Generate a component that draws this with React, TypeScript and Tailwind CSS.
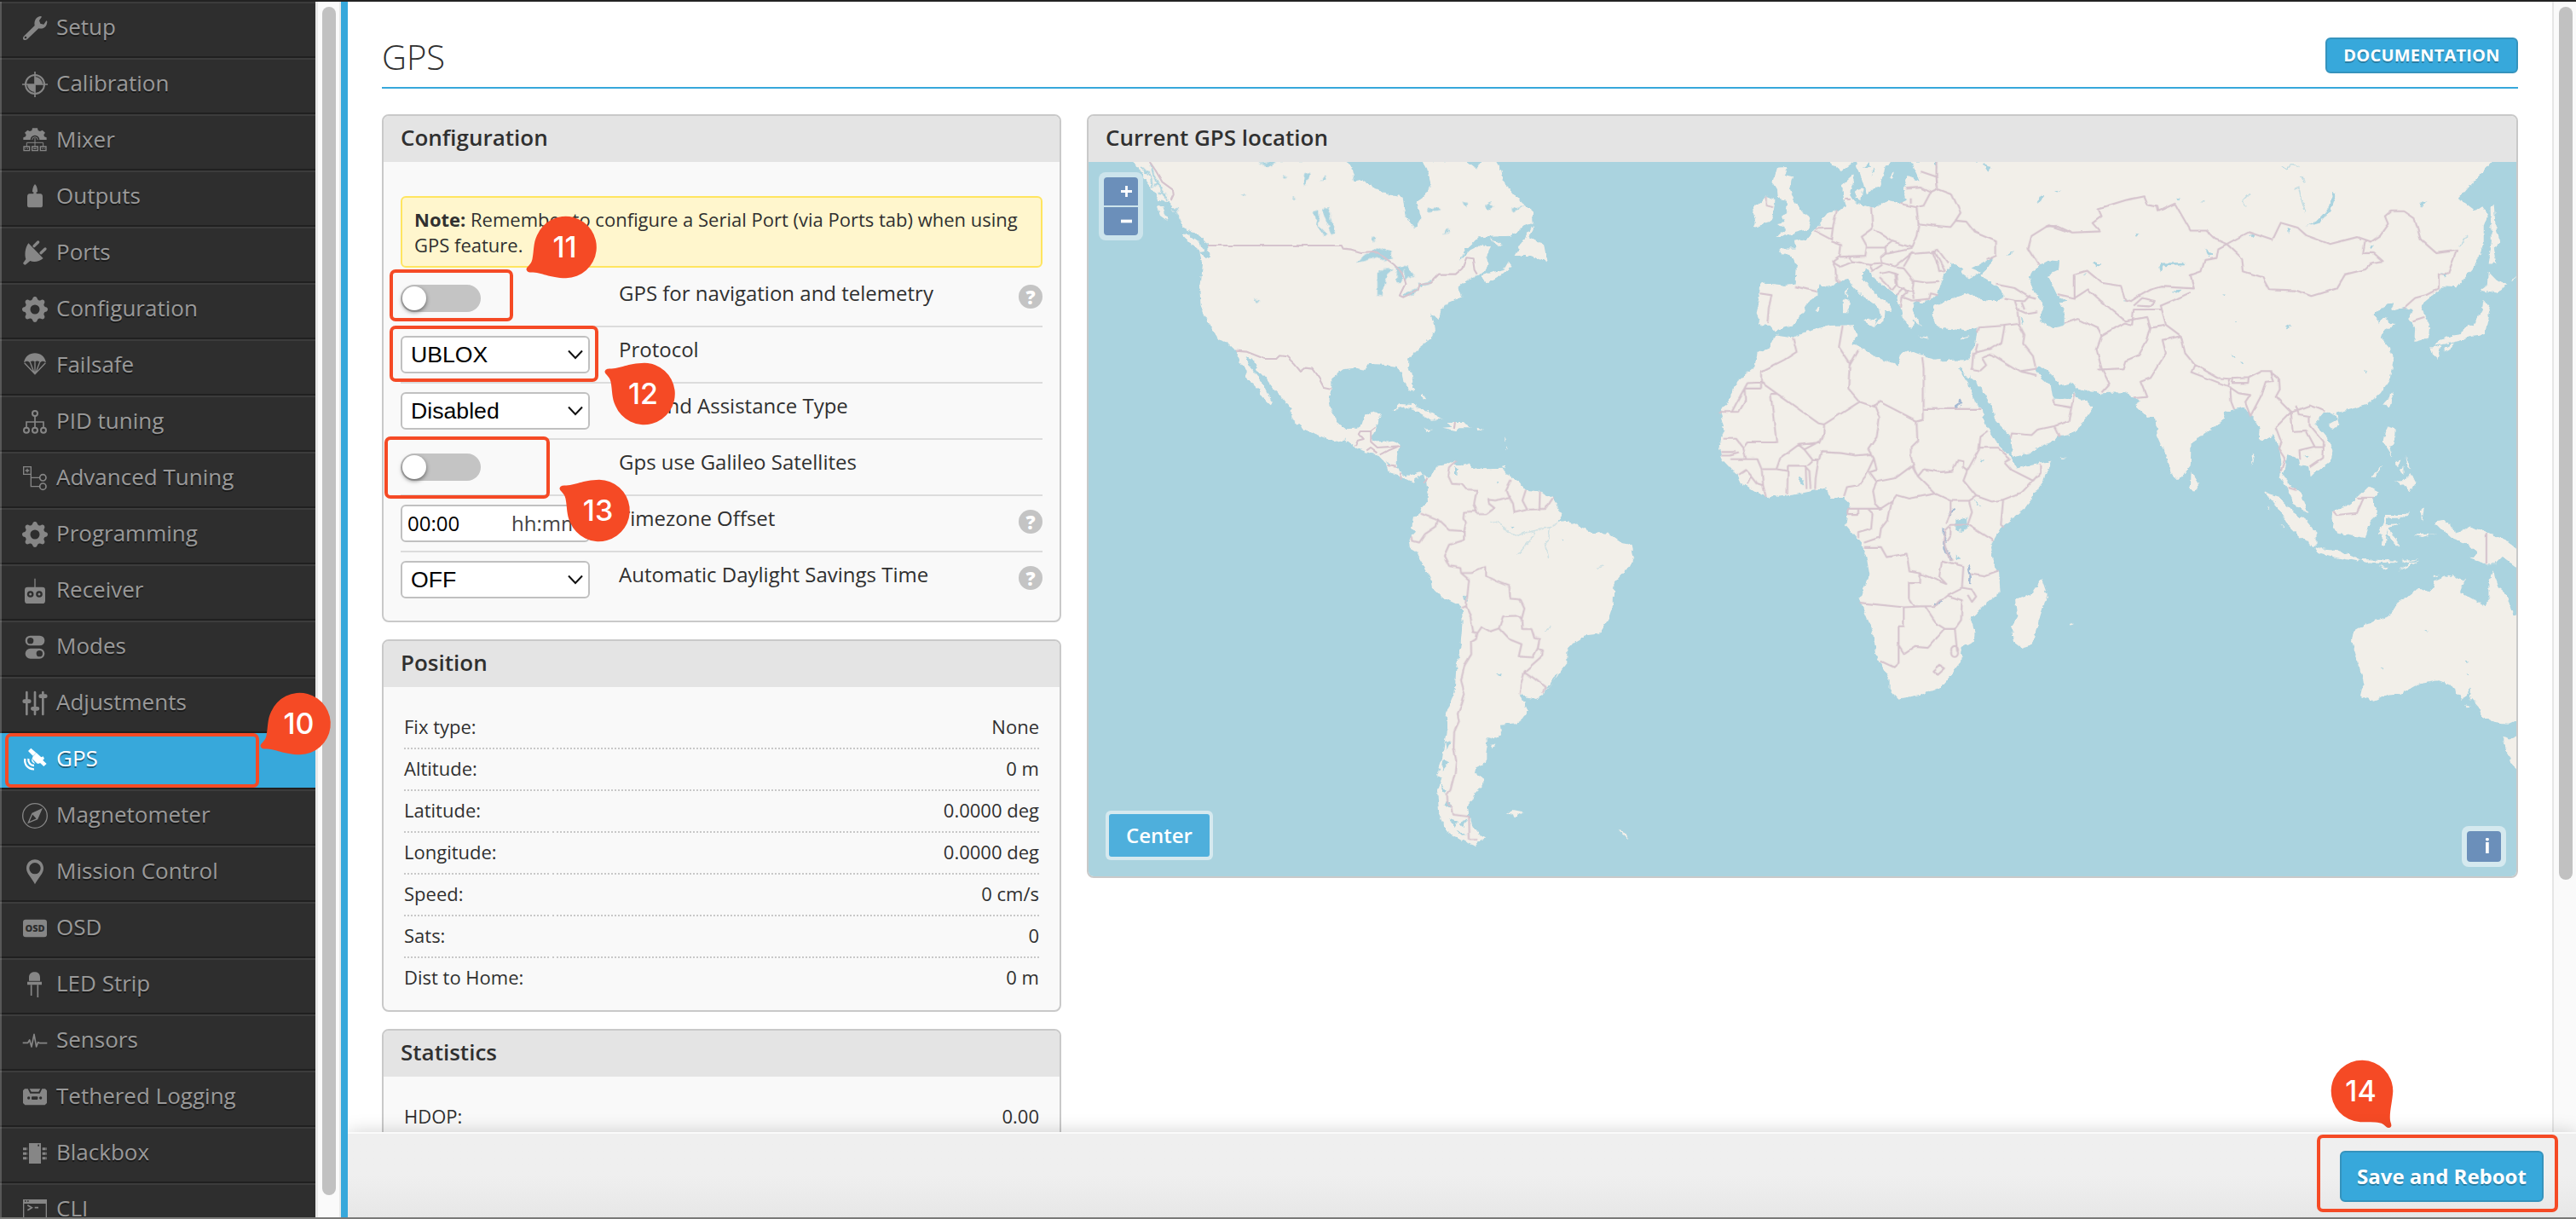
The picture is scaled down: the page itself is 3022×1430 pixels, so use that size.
import React from "react";
import { BsGearFill } from "react-icons/bs";

const S = { fill: "none", stroke: "currentColor" } as const;
const BG = "#2e2e2e";

const icons: Record<string, React.ReactNode> = {
  Setup: (
    <>
      <path fill="currentColor" d="M5 74 44 36C41 18 50 4 66 3L69 5 60 18 64 29 76 32 85 19 88 21C88 39 76 50 58 46L18 84C10 91-2 86 5 74Z" />
      <circle cx="12" cy="78" r="4" fill={BG} />
    </>
  ),
  Calibration: (
    <>
      <circle cx="45" cy="45" r="33" {...S} strokeWidth="6" />
      <path d="M45 0V90M0 45H90" {...S} strokeWidth="5" />
      <path fill="currentColor" d="M45 45V18A27 27 0 0 1 72 45ZM45 45V72A27 27 0 0 1 18 45Z" />
    </>
  ),
  Mixer: (
    <>
      <path fill="currentColor" d="M4 42V34L12 31 14 24 9 17 19 8 27 12 34 9 36 1H54L56 9 63 12 71 8 81 17 76 24 78 31 86 34V42H61A16 16 0 0 0 29 42Z" />
      <path d="M35 42A10 10 0 0 1 55 42M45 36V60M16 66V52H74V66M45 60V66" {...S} strokeWidth="3" />
      <path d="M6 66H26V80H6ZM35 66H55V80H35ZM64 66H84V80H64Z" {...S} strokeWidth="4" />
      <path d="M11 73H14M18 73H21M40 73H50M69 73H72M76 73H79" {...S} strokeWidth="4" />
    </>
  ),
  Outputs: (
    <path fill="currentColor" d="M45 0C53 8 54 18 54 28H50V34H64Q72 35 72 44V74Q72 82 64 82H26Q18 82 18 74V44Q18 35 26 34H40V28H36C36 18 38 8 45 0Z" />
  ),
  Ports: (
    <>
      <path fill="currentColor" d="M22 10 74 63C60 75 42 78 28 72L14 84Q10 88 6 84L3 80 13 66C8 52 10 26 22 10Z" />
      <path d="M42 20 56 6M66 44 81 30" {...S} strokeWidth="10" strokeLinecap="round" />
    </>
  ),
  Failsafe: (
    <>
      <path fill="currentColor" d="M6 34C10 12 26 1 45 1S80 12 84 34C76 27 68 28 63 34 57 27 50 27 45 33 40 27 33 27 27 34 22 28 14 27 6 34Z" />
      <path d="M8 35 45 74 82 35M28 32 43 72M62 32 47 72M45 32V76" {...S} strokeWidth="4" />
    </>
  ),
  "PID tuning": (
    <>
      <g {...S} strokeWidth="6">
        <circle cx="45" cy="15" r="9" /><circle cx="15" cy="74" r="9" /><circle cx="45" cy="74" r="9" /><circle cx="75" cy="74" r="9" />
      </g>
      <path d="M45 24V65M15 65V45H75V65" {...S} strokeWidth="5" />
    </>
  ),
  "Advanced Tuning": (
    <>
      <path d="M5 5H31V31H5ZM18 11V25M11 18H25" {...S} strokeWidth="4" />
      <path d="M31 31V74H62M31 43H62" {...S} strokeWidth="4" />
      <g {...S} strokeWidth="5"><circle cx="73" cy="43" r="11" /><circle cx="73" cy="74" r="11" /></g>
    </>
  ),
  Receiver: (
    <>
      <path d="M45 2V34" {...S} strokeWidth="4" />
      <rect x="9" y="32" width="72" height="58" rx="10" fill="currentColor" />
      <g fill="currentColor" stroke={BG} strokeWidth="7"><circle cx="29" cy="57" r="8" /><circle cx="60" cy="57" r="8" /></g>
    </>
  ),
  Modes: (
    <>
      <rect x="11" y="5" width="68" height="35" rx="17" fill="currentColor" />
      <rect x="11" y="50" width="68" height="36" rx="18" fill="currentColor" />
      <circle cx="29" cy="23" r="11" fill={BG} /><circle cx="61" cy="68" r="11" fill={BG} />
    </>
  ),
  Adjustments: (
    <>
      <path d="M16 6V84M45 6V84M73 6V84" {...S} strokeWidth="8" strokeLinecap="round" />
      <path d="M8 38H25M37 64H54M65 20H82" {...S} strokeWidth="14" strokeLinecap="round" />
    </>
  ),
  GPS: (
    <>
      <path fill="currentColor" d="M31 5 49 21 38 32 21 15ZM50 21 67 37 74 34 78 42 60 59 53 59 35 42 38 34ZM67 42 86 60 76 69 59 53Z" />
      <path d="M34 42Q30 56 46 60" fill="currentColor" />
      <path d="M22 42C20 56 30 66 42 66M10 42C7 64 22 80 42 79" {...S} strokeWidth="7" />
    </>
  ),
  Magnetometer: (
    <>
      <circle cx="45" cy="45" r="43" {...S} strokeWidth="4" />
      <path d="M68 22 53 56 22 69 36 37ZM36 37 53 56" {...S} strokeWidth="4" />
      <path fill="currentColor" d="M68 22 53 56 36 37Z" />
    </>
  ),
  "Mission Control": (
    <path fill="currentColor" fillRule="evenodd" d="M45 1C63 1 75 15 75 32 75 50 57 64 45 88 33 64 15 50 15 32 15 15 27 1 45 1ZM45 12A20 20 0 1 0 45 52 20 20 0 1 0 45 12Z" />
  ),
  OSD: (
    <>
      <rect x="3" y="14" width="84" height="62" rx="9" fill="currentColor" />
      <text x="45" y="57" textAnchor="middle" fontSize="33" fontWeight="800" fill={BG} fontFamily="Open Sans">OSD</text>
    </>
  ),
  "LED Strip": (
    <>
      <path fill="currentColor" d="M24 32V20C24 6 34 1 44 1S63 6 63 20V32ZM18 35H69V46H18Z" />
      <path d="M32 46V84M55 46V90" {...S} strokeWidth="5" />
    </>
  ),
  Sensors: (
    <path d="M2 52H20L26 42 33 66 42 22 50 66 56 50 62 53H88" {...S} strokeWidth="5" strokeLinejoin="round" />
  ),
  "Tethered Logging": (
    <>
      <path fill="currentColor" d="M9 16H20L28 32H62L70 16H81L87 22V66L80 73H10L3 66V22ZM26 16H64L58 26H32Z" />
      <circle cx="23" cy="48" r="5" fill={BG} /><circle cx="65" cy="48" r="5" fill={BG} /><rect x="33" y="43" width="22" height="11" rx="3" fill={BG} />
    </>
  ),
  Blackbox: (
    <>
      <rect x="24" y="9" width="42" height="72" fill="currentColor" />
      <path d="M3 29H19M3 46H19M3 62H19M71 29H87M71 46H87M71 62H87" {...S} strokeWidth="9" strokeDasharray="12 2" />
      <rect x="55" y="14" width="5" height="6" fill={BG} />
    </>
  ),
  CLI: (
    <>
      <path d="M5 11H85V88H5Z" {...S} strokeWidth="4" />
      <path fill="currentColor" d="M3 9H87V24H3Z" />
      <path d="M19 29 34 38 19 47M44 38H57" {...S} strokeWidth="5" />
      <path d="M9 15H14M18 15H23" stroke={BG} strokeWidth="4" />
    </>
  ),
};

const tabs = ["Setup", "Calibration", "Mixer", "Outputs", "Ports", "Configuration", "Failsafe", "PID tuning", "Advanced Tuning", "Programming", "Receiver", "Modes", "Adjustments", "GPS", "Magnetometer", "Mission Control", "OSD", "LED Strip", "Sensors", "Tethered Logging", "Blackbox", "CLI"];

function Sidebar() {
  return (
    <nav className="w-[370px] shrink-0 overflow-hidden bg-[#2e2e2e]">
      {tabs.map((t) => {
        const on = t === "GPS";
        return (
          <div
            key={t}
            className={
              "flex h-[66px] items-start border-y-2 border-b-[#202020] pl-[26px] " +
              (on ? "border-t-[#37a8db] bg-[#37a8db] text-white" : "border-t-[#3c3c3c] text-[#868686]")
            }
          >
            <span className="mt-[14px] block h-[30px] w-[30px]">
              {icons[t] ? (
                <svg viewBox="0 0 90 90" className="h-[30px] w-[30px] overflow-visible">{icons[t]}</svg>
              ) : (
                <BsGearFill className="h-[30px] w-[30px]" />
              )}
            </span>
            <span className={"ml-[10px] text-[26px] leading-[55px] whitespace-nowrap [text-shadow:0_2px_rgba(0,0,0,0.45)] " + (on ? "text-white" : "text-[#999999]")}>{t}</span>
          </div>
        );
      })}
    </nav>
  );
}

function Panel({ title, className = "", children }: { title: string; className?: string; children: React.ReactNode }) {
  return (
    <section className={"flex flex-col overflow-hidden rounded-[8px] border-2 border-[#c9c9c9] bg-[#f9f9f9] " + className}>
      <h2 className="h-[54px] shrink-0 bg-[#e4e4e4] pl-5 text-[26px] leading-[51px] font-semibold text-[#303030]">{title}</h2>
      {children}
    </section>
  );
}

function Toggle() {
  return (
    <div className="mt-4 h-8 w-[94px] rounded-full bg-[#c4c4c4] p-[2px]">
      <div className="h-7 w-7 rounded-full bg-white shadow-[0_2px_5px_rgba(0,0,0,0.5)]" />
    </div>
  );
}

function SelectBox({ value }: { value: string }) {
  return (
    <div className="mt-[10px] flex h-11 w-[222px] items-center justify-between rounded-[6px] border-2 border-[#c0c0c0] bg-white pr-[5px] pl-[10px] font-['Liberation_Sans'] text-[26.67px] text-black">
      <span>{value}</span>
      <svg viewBox="0 0 20 12" className="h-3 w-5"><path d="M2 1.5 10 10 18 1.5" fill="none" stroke="#111" strokeWidth="2" /></svg>
    </div>
  );
}

function TimeBox() {
  return (
    <div className="mt-[10px] flex h-11 w-[222px] items-center rounded-[6px] border-2 border-[#c0c0c0] bg-white pl-[6px] text-[24px] leading-[38px] text-black">
      <span className="w-[122px]">00:00</span>
      <span className="text-[#444]">hh:mm</span>
    </div>
  );
}

const settings = [
  { control: <Toggle />, label: "GPS for navigation and telemetry", help: true },
  { control: <SelectBox value="UBLOX" />, label: "Protocol" },
  { control: <SelectBox value="Disabled" />, label: "Ground Assistance Type" },
  { control: <Toggle />, label: "Gps use Galileo Satellites" },
  { control: <TimeBox />, label: "Timezone Offset", help: true },
  { control: <SelectBox value="OFF" />, label: "Automatic Daylight Savings Time", help: true },
];

function DataRow({ name, value, last }: { name: string; value: string; last?: boolean }) {
  const line = last ? "border-transparent" : "border-[#c8c8c8]";
  return (
    <div className="flex h-[49px] gap-1 text-[22px] leading-[45px] text-[#303030]">
      <span className={"w-[170px] border-b-2 border-dotted " + line}>{name}</span>
      <span className={"flex-1 border-b-2 border-dotted text-right " + line}>{value}</span>
    </div>
  );
}

const position = [
  ["Fix type:", "None"], ["Altitude:", "0 m"], ["Latitude:", "0.0000 deg"], ["Longitude:", "0.0000 deg"],
  ["Speed:", "0 cm/s"], ["Sats:", "0"], ["Dist to Home:", "0 m"],
];

// Each region of the map keeps its own local coordinate frame.
const AMN = "translate(1260 120) scale(0.38265 0.33333)";
const AMS = "translate(1600 480) scale(0.33333 0.35714)";
const AFR = "translate(1960 180) scale(0.33333 0.42088)";
const ASI = "translate(2400 180) scale(0.39668 0.44643)";

const landAMN = "M180 205 205 245 230 290 245 320 262 345 295 350 300 380 325 410 335 440 385 470 410 500 415 545 405 550 385 525 392 570 385 655 388 710 400 750 420 790 443 835 470 845 492 870 510 915 530 945 525 965 550 990 570 1015 575 1035 600 1063 607 1055 590 1020 575 985 555 955 540 930 527 898 548 905 560 940 590 975 610 1005 640 1040 665 1080 668 1115 700 1145 740 1170 800 1195 830 1187 860 1212 880 1228 930 1240 955 1270 962 1298 1000 1318 1040 1340 1045 1322 1070 1312 1080 1335 1100 1350 1110 1310 1085 1322 1060 1303 1030 1313 1010 1310 990 1290 990 1250 997 1205 980 1190 930 1195 915 1195 912 1180 930 1130 943 1095 920 1090 893 1100 885 1130 860 1148 830 1150 810 1135 785 1080 780 1045 790 1005 790 970 825 940 860 935 895 942 905 920 960 925 990 930 1005 950 1010 985 1030 1020 1043 1015 1040 975 1025 930 1025 905 1045 875 1095 830 1108 800 1105 780 1095 745 1115 765 1125 735 1135 710 1190 685 1180 650 1200 630 1240 605 1262 590 1270 560 1265 540 1278 510 1250 500 1215 520 1183 555 1200 520 1240 475 1340 470 1380 435 1408 430 1405 380 1370 350 1340 310 1320 290 1310 240 1292 205H1252L1230 235 1200 208 1190 205H1066L1085 245 1095 290 1075 330 1050 350 1065 410 1045 445 1015 400 1008 335 965 325 920 300 880 270 860 275 850 225 825 205ZM1250 610 1290 595 1318 588 1332 560 1342 575 1305 612 1262 640ZM1400 440 1410 440 1395 475 1440 500 1450 562 1400 540 1350 540 1370 500ZM1275 480 1315 500 1295 500ZM327 460 345 462 380 490 402 522 385 525 355 495ZM255 365 273 370 290 420 265 400ZM978 1085 1000 1062 1040 1065 1080 1085 1130 1115 1095 1118 1070 1100 1040 1080 1010 1072ZM1130 1148 1162 1145 1145 1125 1190 1125 1217 1147 1180 1147 1170 1158ZM1070 1150 1100 1152 1080 1160ZM1235 1145 1258 1152 1236 1155ZM1068 1025 1080 1045 1070 1045ZM1318 1180 1322 1190 1318 1200ZM1326 1210 1330 1218 1325 1225Z";
const waterAMN = "M865 565 880 545 905 530 935 510 970 525 975 550 945 558 930 545 885 560ZM930 600 945 588 980 585 960 605 950 640 945 682 930 680ZM985 575 1020 580 1045 610 1030 615 1015 625 1010 590 1005 630 988 635 990 600ZM1005 680 1050 655 1055 665 1015 688ZM1055 640 1098 628 1090 642 1060 650ZM760 375 780 372 800 460 790 468 770 410ZM735 385 748 380 750 430 775 465 768 472 745 430ZM706 250 722 245 712 290 702 292ZM755 280 772 255 772 275ZM553 685 568 700 562 705ZM915 475 924 480 920 495ZM565 215 590 212 620 205 600 225ZM1260 365 1275 352 1285 370 1265 382ZM1190 350 1208 355 1200 370ZM1080 375 1115 370 1125 378 1090 385ZM1338 380 1380 358 1345 388ZM1133 465 1150 440 1145 460ZM640 262 658 260 645 270ZM510 322H528L520 328ZM670 330 678 340 670 342ZM955 1262 972 1275 965 1280Z";
const channelsAMN = "M205 225 235 260 240 300M235 215 245 260 265 300 285 345M215 250 230 245M245 290 262 290M255 320 285 325M270 345 310 385 330 425M300 375 320 375";
const bordersAMN = "M232 210 250 240 270 280 303 308 305 325 297 345M410 504H820L825 515 850 518 880 528 920 525 950 545 980 570 1005 600 1015 640 998 680 1010 686 1055 660 1060 640 1095 632 1118 605H1170L1190 585 1203 547 1225 550 1230 590 1238 605M497 875 530 878 585 903 620 903 630 892 652 895 675 920 695 948 710 935 730 938 750 970 765 1002 790 1008M862 1212 870 1190 888 1185 875 1168 880 1158H910L925 1145M910 1158V1195L930 1215 997 1210 965 1225 940 1240M897 1225 910 1215 930 1232M960 1278 988 1283M1003 1300 1002 1325M1168 1125 1165 1152M1083 1322 1075 1340";
const landAMS = "M218 222 228 240 255 190 300 180 325 165 318 182 350 185 375 178 382 195 430 197 490 195 505 215 545 240 570 265 620 270 665 290 692 340 700 365 725 372 780 390 790 405 860 408 910 440 940 445 950 485 940 510 905 545 880 572 878 640 860 690 830 735 785 740 740 765 715 790 715 835 690 865 640 925 610 955 575 948 548 935 565 965 577 990 555 1022 530 1032 480 1035 483 1070 465 1082 433 1075 435 1100 430 1130 430 1160 395 1175 390 1195 422 1215 420 1235 390 1262 385 1285 365 1300 370 1335 380 1370 410 1400 430 1410 395 1418 398 1437 340 1415 290 1385 265 1330 258 1250 275 1210 255 1205 275 1150 285 1090 293 1045 290 1000 320 930 325 850 340 780 347 700 345 655 325 640 270 615 243 590 240 565 205 505 180 465 162 455 158 430 180 405 165 390 170 360 200 340 205 325 225 305 222 255ZM500 1330 525 1316 560 1322 530 1342 525 1328ZM895 1383 918 1392 935 1412 915 1400ZM445 1105 460 1102 452 1118ZM488 190 502 188 500 200Z";
const waterAMS = "M318 190 330 200 328 215 318 212ZM465 875 485 868 482 880ZM350 610 362 612 370 628 355 622ZM640 920 665 880 680 870 668 892 648 915ZM285 1095 305 1090 292 1120ZM280 1150 300 1160 275 1190ZM270 1230 290 1250 282 1260ZM280 1300 300 1290 305 1310ZM300 1345 330 1355 320 1375ZM335 1360 365 1345 350 1375ZM325 1385 360 1400 345 1402ZM678 372 700 350 720 372 700 380 715 374 690 366ZM695 422 703 430 697 434ZM515 382 530 388 522 392ZM468 238 475 242 470 248Z";
const riversAMS = "M680 375 655 388 605 398 570 405 545 415 510 405 480 375 445 365M605 398 590 425 545 475M655 388 650 430 640 440 650 490M820 520 845 512M640 728 658 712";
const bordersAMS = "M325 170 300 190 295 215 310 245 345 247 360 263 397 265 388 310 400 345 430 345 460 325 440 310 438 297 465 300 510 288 500 265 518 232M400 335 352 337 350 360 360 375 352 400 300 397 260 362 200 340M260 362 255 385 215 410 195 438 172 432 170 418M352 400 352 430 300 445 282 482 300 515 340 522 342 538 380 538 430 518 430 548 465 565 512 582 515 622 550 625 565 655 555 690 545 678 490 680 475 720 510 755 555 772 545 812 595 815 612 785 618 755 600 752 590 722H557L555 690M342 538 370 560 360 650 345 655M360 650 375 680 385 732 400 735 415 715 445 730 475 720M400 735 395 755 377 765 378 805 355 840 342 890 355 935 340 980 330 1000 335 1025 318 1060 316 1110 325 1155 320 1195 305 1250 293 1265 295 1298 310 1305 315 1332 370 1338 372 1412 400 1412M612 785 630 792 628 810 565 862 552 905 548 935M565 862 600 885 637 912 630 932M510 285 525 310 530 340 575 330 640 327 665 292M570 265 558 300 575 330M620 270 618 325";
const landAFR = "M1560 20H845L875 75 832 62 822 100 830 130 805 140 770 130 708 152 665 140 645 135 630 115 645 80 640 60 605 85 605 110 618 150 590 158 555 165 530 190 505 215 485 235 435 245 440 265 385 265 390 278 425 285 443 315 440 365 400 368 325 360 308 375 315 400 302 445 320 478 350 480 368 497 400 485 430 482 460 450 490 410 517 395 520 365 560 372 600 355 625 350 645 375 680 400 735 430 740 455 715 485 748 470 752 438 778 436 770 420 730 400 700 370 675 345 675 330 690 322 720 350 770 380 795 395 800 420 812 435 815 460 850 490 855 465 882 480 850 440 855 412 880 418 915 405 935 398 945 370 960 340 990 308 1030 320 1022 332 1050 348 1090 330 1060 320 1110 300 1135 293 1115 320 1090 340 1150 370 1175 395 1165 408 1110 410 1045 390 990 405 925 425 920 450 935 485 990 490 1040 495 1080 485 1070 540 1048 575 1055 625 1080 640 1130 705 1140 740 1195 790 1200 845 1260 835 1350 800 1360 790 1400 785 1440 760 1485 710 1465 690 1420 680 1420 660 1405 685 1345 680 1338 650 1310 630 1285 600 1300 590 1330 610 1390 645 1435 640 1450 660 1520 668 1560 662ZM675 465 725 460 718 485ZM605 410 630 410 625 445 607 445ZM612 382 625 374 620 405ZM865 508 910 512 905 516ZM1015 515 1050 506 1030 518ZM375 40 410 38 395 60 433 65 420 100 440 140 465 165 493 180 485 210 430 222 370 235 402 210 375 195 402 190 390 175 412 165 405 130 378 125 375 100 360 80ZM335 120 368 130 360 170 350 190 290 205 300 185 290 160 300 145ZM652 20 668 60 690 115 715 95 735 90 750 55 755 35 790 20ZM556 20 600 50 650 20ZM652 103 677 95 670 130 650 125ZM770 70 785 50 782 70ZM505 435 522 430 515 440Z M1060 600 1050 575 960 578 895 565 840 548 805 560 800 588 730 570 680 545 637 530 655 505 640 478 560 480 500 490 430 512 370 505 350 540 305 555 295 595 240 630 210 675 173 725 190 770 170 815 180 850 235 895 250 920 335 960 430 952 545 933 565 960 610 960 630 975 615 1035 670 1085 690 1130 700 1175 665 1245 710 1330 725 1400 770 1465 770 1495 800 1520 880 1508 950 1490 1020 1420 1025 1378 1068 1360 1070 1330 1055 1298 1100 1260 1160 1225 1155 1165 1135 1140 1125 1095 1160 1045 1250 985 1310 915 1338 857 1220 878 1200 850 1150 810 1105 755 1095 715 1070 690 1045 640 1015 597 1020 595 1048 628ZM1305 1185 1325 1230 1300 1290 1270 1370 1235 1378 1205 1360 1200 1320 1222 1290 1215 1245 1270 1225ZM1372 849 1392 850 1380 853ZM1405 1308 1418 1312 1408 1315Z";
const waterAFR = "M1262 345 1280 320 1330 298 1368 300 1365 325 1325 340 1345 370 1360 395 1398 410 1370 415 1385 440 1385 480 1345 487 1300 465 1310 425 1295 400 1275 380ZM1003 1022 1045 1015 1045 1035 1030 1052 1003 1050ZM700 62 715 40 720 42ZM675 40 700 24 705 38ZM925 24H937V45ZM1100 30 1130 40 1115 50ZM1228 455 1243 470 1238 478ZM1090 852 1105 855 1095 860ZM447 900 470 910 468 930ZM1072 960 1090 985 1082 980ZM1003 1118 1022 1130 1010 1132ZM1290 140 1298 120 1318 122 1298 135ZM1350 105 1375 103 1360 108ZM1485 305 1512 308 1495 314ZM1005 245 1030 252ZM1180 285 1205 268 1200 280Z";
const lakesAFR = "M962 1045 965 1100 990 1135M1045 1150 1055 1180 1053 1200M980 1010 995 990M930 1258 955 1245M1015 685 1025 695 1000 710";
const bordersAFR = "M505 215 565 240 572 200 585 160M510 210 570 208M565 245 600 255 595 285 568 300 580 320 582 352 595 358M435 370 515 385M313 390 355 395 345 430 340 475M705 150 710 210 672 232 690 258 685 285 595 288M718 212 780 245 752 262 690 262M780 245 848 262 865 230 872 198 865 150 805 140M825 98 880 95 915 108 890 145 865 150M845 125V140M880 50 935 65 940 100 990 115 1020 165 1000 190 985 205 920 200 872 195M935 24V65M940 100 915 110M1000 187 1040 190 1070 220 1145 245 1145 285 1112 297M848 265 755 280 752 262M755 280 740 290 745 305 700 308 640 300 625 285M568 300 600 315 645 300M745 305 790 315 845 280 930 275 965 325 945 328 940 310 920 272 940 268 975 305M700 308 710 328 745 310M735 335 765 330 790 335 795 365 780 380 735 345M795 318 820 320 855 355 850 385 830 385 800 370 795 335M820 315 850 275M855 355 900 360 945 358M795 395 820 375 830 390 815 400 810 430M815 400 850 410 910 405 915 390 940 395M850 385 855 405M335 120V145L360 150M610 128H632M1145 365 1210 375 1260 400 1285 405M1175 405 1210 410 1245 412 1265 395M1210 410 1220 435 1250 445 1290 440M1235 415 1245 435M1220 440 1225 475 1170 480 1085 485 1080 500M1175 480 1165 525 1125 545 1070 555M1225 475 1245 505 1240 530 1275 565 1285 600 1228 607 1130 560 1095 570 1110 590 1090 605 1055 600M1065 555 1060 600M1080 530 1070 560M1228 607 1290 618M1345 685 1350 700 1410 708 1420 670M1410 708 1400 745 1350 760 1290 770 1270 785 1200 780 1195 795M1350 760 1368 790M1258 265 1270 230 1330 200 1400 218M1258 265 1295 310M430 512 443 553 400 575 318 608V638L520 752 540 755 665 692 625 655 630 585 592 540 605 480M318 655H260L262 690 240 720H173M318 638 270 640 235 690 215 720M318 640V655M660 548 630 590M665 692 715 705 735 692 865 745 890 740V600L885 570M890 712H1093M352 670 362 740 372 805H270L255 820 230 795H185M352 670H375M540 755 538 785 525 805 450 812 385 850 372 880 320 880 305 852 210 852M450 812 470 825 500 855 520 855M470 825 530 800M178 832H228M178 842H210L240 835M265 852 255 820M240 895 265 882 285 900 272 920M285 900 305 920 325 925 335 958M320 880 325 925M372 880 412 885 410 950M412 870H475L478 935M470 870 488 885 492 935M412 870 412 885M500 855 480 870M520 855 510 905 508 935M530 830 522 855M530 832 600 835 650 842 705 838 715 850 685 900 660 925 620 930 610 955M715 700 735 735 725 790 695 825 715 850 725 882 700 888 725 915 712 940 720 975 738 990 778 970M865 745 868 802 845 820 845 845 860 885 850 870 790 905 725 915M860 885 870 900 932 948 985 968 1050 968M870 900 890 880 950 888 990 885 1010 855 1030 858 1028 875 1043 885 1030 912 1075 955M1115 775 1090 790 1085 825 1043 885M1085 820 1150 820 1195 850M1175 860 1200 882 1275 912 1300 890V865M1195 850 1175 858M1275 912 1235 945 1170 965 1130 970 1075 955 1050 968 1060 1000 1045 1035 1135 1080M1170 965 1162 1035 1172 1042M738 990H625V1005H660V990M690 990 710 1005 705 1045 660 1055V1070M778 970 765 1020 740 1045 735 1070 680 1085M778 970 795 952 840 962 932 948M680 1097H740L760 1125 830 1115 840 1165 875 1170V1195H838V1240L855 1262 930 1262 975 1232 1025 1245 1022 1300 1000 1325M875 1170 970 1200 945 1180 955 1135 1030 1150 1025 1210 975 1230M1045 1035H985L965 1050 960 1075 970 1110 990 1135M985 968 985 1000 970 1030M985 1040V1060L970 1080M1025 1210 1060 1215 1075 1235 1060 1250 1045 1230M1055 1172 1100 1178 1155 1162M665 1252 820 1265 895 1262 935 1310 965 1325 1000 1325 1008 1388M820 1265V1320H802V1420L785 1432 740 1415M802 1370 822 1395 860 1375 905 1378 965 1325M988 1388A12 11 0 1 0 1010 1388 12 11 0 1 0 988 1388M922 1442 945 1425 965 1435 940 1453Z";
const landASI = "M0 10H1330L1318 22 1218 122 1240 130 1270 150 1290 138 1308 160 1295 190 1295 245 1265 300 1215 352 1175 350 1140 375 1108 400 1120 425 1135 450 1132 485 1090 495 1092 460 1072 435 1085 410 1060 405 1020 415 1030 392 1000 402 967 425 985 445 1005 428 1015 448 1037 450 1005 465 990 485 1015 510 1030 545 1020 590 990 630 950 660 860 682 865 705 850 682 825 680 797 710 830 745 848 780 840 810 800 835 783 850 780 825 750 820 745 800 715 790 705 830 700 840 720 870 755 895 775 945 730 920 715 880 690 850 697 815 690 770 670 740 640 757 630 750 632 720 610 690 590 665 530 680 525 700 490 725 430 760 428 820 415 835 390 858 370 840 350 780 330 740 322 690 300 692 262 660 280 650 235 627 165 630 90 618 80 605 40 610 0 560ZM1315 140 1325 133 1330 190 1345 235 1323 250 1332 290 1310 290 1318 230ZM1310 312 1335 335 1365 345 1330 368 1285 360 1308 345ZM1295 385 1315 410 1298 475 1255 480 1215 495 1150 505 1165 488 1205 478 1230 475 1235 460 1265 450 1290 410ZM1138 510 1168 505 1158 542 1145 530ZM1180 508 1210 498 1200 510 1182 520ZM1028 626 1015 670 1002 655ZM836 712 860 700 872 710 850 726ZM430 835 455 870 440 886 428 884ZM1010 718 1033 725 1030 765 1015 770 1028 798 998 758ZM1030 862 1060 860 1080 840 1093 865 1078 890 1060 872ZM1035 810 1050 805 1040 825ZM1045 830 1060 820 1060 845ZM1065 795 1080 830 1070 822ZM958 850 998 820 970 850ZM845 940 875 935 915 910 955 875 985 890 965 905 982 945 960 965 945 1010 860 998 843 960ZM645 890 685 900 730 940 770 965 798 995 798 1035 760 1015 720 980 690 935ZM798 1038 870 1045 925 1066 920 1072 850 1060 800 1048ZM930 1066 1040 1070 1030 1076 940 1074ZM1045 1097 1075 1076 1105 1070 1070 1086ZM985 1082 1010 1088 1005 1094ZM1050 1068 1100 1066 1060 1076ZM1000 950 1062 950 1078 938 1062 958 1007 958 1005 975 1048 972 1015 985 1045 1030 1020 1018 1010 990 1002 1032 993 1030 995 1005 983 1000 998 970ZM1110 940 1122 930 1115 965ZM1088 1002 1155 1000 1110 1008ZM1150 968 1180 965 1205 985 1210 1000 1255 980 1300 993 1365 1020 1400 1045V1092L1350 1060 1330 1078 1300 1078 1255 1065 1275 1050 1245 1025 1200 1010 1180 995ZM785 985 805 995 792 998ZM910 1255 950 1235 1020 1215 1040 1180 1070 1165 1105 1140 1135 1155 1150 1125 1190 1108 1240 1120 1225 1152 1300 1190 1312 1165 1312 1120 1322 1098 1340 1140 1360 1155 1380 1210 1400 1215V1488L1370 1500 1335 1498 1290 1480 1280 1455 1255 1430 1258 1405 1235 1438 1200 1398 1160 1385 1100 1395 1050 1420 1000 1425 970 1440 930 1425 940 1390 915 1310 905 1280ZM1145 1108 1165 1108 1150 1113ZM1352 1532 1370 1540 1400 1530V1620L1375 1600 1362 1570ZM1240 1448 1258 1452 1245 1455ZM610 788 616 790 607 825ZM655 925 665 935 658 932ZM695 975 705 985 702 988ZM1378 335 1392 322 1385 335Z";
const waterASI = "M850 100 858 110 845 145 810 182 772 192 800 178 835 145ZM333 300 345 288 415 286 410 292 350 294 338 312ZM373 362 400 360 390 368ZM472 252 495 265 485 270ZM603 215 618 212 612 222ZM715 195 725 198 718 212ZM138 288 160 290 152 296ZM708 450 725 456 715 460ZM1105 130 1128 124 1112 140ZM955 245 968 238 960 252ZM1170 312 1186 316 1178 328ZM388 118 398 120 392 126ZM940 572 953 574 946 578ZM263 212 274 214 268 218ZM765 793 778 796 772 800ZM1118 1253 1132 1256 1125 1258ZM1240 1332 1254 1334 1246 1338ZM1245 1366 1256 1370 1250 1373ZM988 1348 996 1350 992 1354ZM522 370 535 371 528 374ZM550 532 562 534 556 537ZM572 547 584 549 578 552ZM555 441 568 443 562 446Z";
const riversASI = "M700 35 715 40 725 30 750 35M755 60 765 75M735 95 748 90 755 120 768 155M590 140 583 125 605 105M455 130 470 122M112 320 120 315M230 387 245 388M1245 215 1225 245";
const bordersASI = "M0 192 35 190 78 208 160 205 138 183 165 165 155 145 240 122 292 113 302 135 330 140 333 152 382 132 428 203 475 203 500 225 535 238 600 207 670 228 695 182 745 195 770 215 840 238 920 220 960 232 988 215 1012 185 1003 165 1020 152 1060 152 1090 170 1108 225 1155 262 1215 255 1190 315 1162 317V355L1125 372 1092 380 1060 405M535 238 510 250 505 275 470 280 460 310 428 320 438 355 342 350 310 358 270 378 252 388 235 385 222 348 165 340 122 308 85 318V380L35 370M85 380 125 357 160 385 235 440 300 430 310 458 352 452M535 238 580 275 585 310 640 325 660 357 740 360 785 375 860 355 885 318 945 305 965 287 997 283 970 262 938 262 945 225M428 365 380 385 340 400 355 450 400 480 412 525 440 555 510 590 545 592 600 590 640 572 665 572 690 590 692 620 680 640 725 680 780 662 825 678M55 447 95 435 155 460 165 478 230 445 255 450 260 410 345 410M260 400 285 380 322 388 305 402 270 400M165 478 150 515 165 565 188 605 165 628M155 568 228 565 235 545 275 530 300 490 310 458M400 480 345 490 355 525 310 590 280 600 298 640 262 643M440 555 430 575 540 612 545 592M545 612 548 650 558 672M545 615 570 630 605 635 590 655 605 690 635 640 650 600 675 598 665 572M552 603H598L600 590M555 590 552 603M725 680 680 720 697 760 690 775 708 800 695 835M725 680 730 730 770 728 795 770 750 780 752 805M740 665 745 685 780 690 780 715 822 760 820 800 780 825M795 772H820M715 878 742 885M850 940 860 950 920 945 940 905 970 905M940 905 920 905M1085 440 1120 430M1303 995V1078";

function WorldMap() {
  const regions = [
    { t: AMN, land: landAMN, water: waterAMN, borders: bordersAMN, rivers: channelsAMN, tint: "#aad3df", rw: 2 },
    { t: AMS, land: landAMS, water: waterAMS, borders: bordersAMS, rivers: riversAMS, tint: "#d0e1e3", rw: 1.5 },
    { t: ASI, land: landASI, water: waterASI, borders: bordersASI, rivers: riversASI, tint: "#c4dde2", rw: 1.5 },
    { t: AFR, land: landAFR, water: waterAFR, borders: bordersAFR, rivers: lakesAFR, tint: "#a3b9d3", rw: 2.5 },
  ];
  return (
    <svg viewBox="1277 190 1675 838" preserveAspectRatio="none" className="block h-full w-full bg-[#aad3df]">
      <defs>
        <filter id="coast" filterUnits="userSpaceOnUse" x="1277" y="180" width="1700" height="860">
          <feTurbulence type="fractalNoise" baseFrequency="0.13" numOctaves="3" seed="4" result="n" />
          <feDisplacementMap in="SourceGraphic" in2="n" scale="6" xChannelSelector="R" yChannelSelector="G" />
        </filter>
        <filter id="frontier" filterUnits="userSpaceOnUse" x="1277" y="180" width="1700" height="860">
          <feTurbulence type="fractalNoise" baseFrequency="0.08" numOctaves="1" seed="7" result="n" />
          <feDisplacementMap in="SourceGraphic" in2="n" scale="4" xChannelSelector="R" yChannelSelector="G" />
        </filter>
      </defs>
      <g filter="url(#coast)">
        {regions.map((r) => <path key={"l" + r.t} transform={r.t} d={r.land} fill="#f2efe9" />)}
        {regions.map((r) => (
          <g key={"w" + r.t} transform={r.t}>
            <path d={r.water} fill="#aad3df" />
            <path d={r.rivers} fill="none" stroke={r.tint} strokeWidth={r.rw} vectorEffect="non-scaling-stroke" />
          </g>
        ))}
      </g>
      <g filter="url(#frontier)">
        {regions.map((r) => (
          <path key={"b" + r.t} transform={r.t} d={r.borders} fill="none" stroke="#d5c3cd" strokeWidth="2.1" strokeLinejoin="round" vectorEffect="non-scaling-stroke" />
        ))}
      </g>
    </svg>
  );
}

function Marker({ n, cx, cy, kind }: { n: string; cx: number; cy: number; kind: "down" | "up" | "right" }) {
  const d =
    kind === "right"
      ? "M-2 36.3C14 37 19 35.5 25 39 28 41 29 43.5 32 43 35 42 34.5 40 34 38 30.5 30 35.5 14 36.3 0A36.3 36.3 0 1 0-2 36.3Z"
      : "M0 36.3C-20 36-28 29.5-41 29.5-43 29.5-46 29-46.5 26-46.5 23-41 21-39.5 14-37.5 4-38.5-5-34-14A36.3 36.3 0 1 1 0 36.3Z";
  return (
    <div className="absolute h-[100px] w-[100px]" style={{ left: cx - 50, top: cy - 50 }}>
      <svg viewBox="-50 -50 100 100" className="absolute inset-0 h-full w-full">
        <path d={d} fill="#f54a25" transform={kind === "up" ? "scale(1 -1)" : undefined} />
      </svg>
      <span className="absolute inset-0 pr-[3px] text-center font-['Inter'] text-[34px] leading-[100px] font-medium text-white">{n}</span>
    </div>
  );
}

const frame = "absolute border-4 border-[#f54a25] rounded-[7px]";

export default function App() {
  return (
    <div className="relative flex h-[1430px] w-[3022px] flex-col overflow-hidden bg-white font-['Open_Sans',sans-serif] text-[#303030]">
      <div className="h-[2px] shrink-0 bg-[#222]" />
      <div className="flex h-[1426px] overflow-hidden">
        <Sidebar />
        <div className="w-[30px] shrink-0 border-r-2 border-l-[3px] border-[#e8e8e8] bg-[#fafafa] pt-[6px] pl-[5px]">
          <div className="h-[1394px] w-4 rounded-full bg-[#c1c1c1]" />
        </div>
        <div className="w-2 shrink-0 bg-[#37a8db]" />
        <main className="flex min-w-0 flex-1 flex-col">
          <div className="flex h-[1326px] shrink-0 overflow-hidden">
            <div className="w-[2586px] shrink-0 px-10">
              <header className="flex h-[102px] items-start justify-between border-b-2 border-[#37a8db]">
                <h1 className="pt-[37px] text-[40px] leading-[56px] font-light">GPS</h1>
                <button className="mt-[42px] h-[42px] w-[226px] rounded-[6px] border-2 border-[#3593bd] bg-[#37a8db] text-[20px] leading-[36px] font-bold tracking-[0.2px] text-white [text-shadow:0_2px_rgba(0,0,0,0.25)]">DOCUMENTATION</button>
              </header>
              <div className="mt-[30px] flex items-start justify-between">
                <div className="flex w-[797px] flex-col gap-5">
                  <Panel title="Configuration" className="h-[596px]">
                    <div className="px-5 pt-10">
                      <p className="h-[84px] rounded-[6px] border-2 border-[#ffe55f] bg-[#fff6cd] px-[14px] py-[10px] text-[22px] leading-[30px]">
                        <b>Note:</b> Remember to configure a Serial Port (via Ports tab) when using GPS feature.
                      </p>
                      <div className="mt-1">
                        {settings.map((s, i) => (
                          <div key={s.label} className={"flex h-[66px] items-start border-b-2 " + (i === 5 ? "border-transparent" : "border-[#dcdcdc]")}>
                            <div className="w-[256px] shrink-0">{s.control}</div>
                            <span className="flex-1 text-[24px] leading-[52px]">{s.label}</span>
                            {s.help && <span className="mt-4 h-7 w-7 rounded-full bg-[#c4c4c4] text-center text-[22px] leading-7 font-extrabold text-white">?</span>}
                          </div>
                        ))}
                      </div>
                    </div>
                  </Panel>
                  <Panel title="Position" className="h-[437px]">
                    <div className="px-6 pt-[24px]">
                      {position.map(([n, v], i) => <DataRow key={n} name={n} value={v} last={i === 6} />)}
                    </div>
                  </Panel>
                  <Panel title="Statistics" className="h-[437px]">
                    <div className="px-6 pt-[24px]"><DataRow name="HDOP:" value="0.00" /></div>
                  </Panel>
                </div>
                <Panel title="Current GPS location" className="h-[896px] w-[1679px]">
                  <div className="relative min-h-0 flex-1">
                    <WorldMap />
                    <div className="absolute top-3 left-3 flex h-20 w-[52px] flex-col gap-[2px] rounded-[8px] bg-white/40 p-[6px]">
                      <span className="flex flex-1 items-center justify-end rounded-t-[4px] bg-[#6b8fba] pr-[7px]"><svg viewBox="0 0 14 14" className="h-[13px] w-[13px]"><path d="M7 0V14M0 7H14" stroke="white" strokeWidth="3" /></svg></span>
                      <span className="flex flex-1 items-center justify-end rounded-b-[4px] bg-[#6b8fba] pr-[7px]"><svg viewBox="0 0 14 14" className="h-[13px] w-[13px]"><path d="M0 7H14" stroke="white" strokeWidth="4" /></svg></span>
                    </div>
                    <div className="absolute top-[761px] left-[20px] h-[58px] w-[126px] rounded-[6px] bg-white/50 p-[4px]">
                      <div className="h-full rounded-[3px] bg-[#4eafdc] text-center text-[24px] leading-[50px] font-semibold text-white">Center</div>
                    </div>
                    <div className="absolute top-[779px] left-[1611px] h-[48px] w-[52px] rounded-[8px] bg-white/50 p-[6px]">
                      <div className="h-full rounded-[4px] bg-[#6b8fba] pl-[8px] text-center text-[24px] leading-[34px] font-bold text-white">i</div>
                    </div>
                  </div>
                </Panel>
              </div>
            </div>
            <div className="w-[28px] border-l-2 border-[#e6e6e6] bg-[#fafafa] pt-[6px] pl-[6px]">
              <div className="h-[1024px] w-4 rounded-full bg-[#c1c1c1]" />
            </div>
          </div>
          <footer className="z-10 flex h-[100px] shrink-0 items-start justify-end border-t-2 border-[#fafafa] bg-linear-to-b from-[#efefef] from-50% to-[#e7e7e7] pt-5 pr-[38px] shadow-[0_0_20px_rgba(0,0,0,0.18)] [clip-path:inset(-30px_0_0_0)]">
            <button className="h-[60px] w-[239px] rounded-[6px] border-2 border-[#3593bd] bg-[#37a8db] text-[24px] leading-[54px] font-bold text-white [text-shadow:0_2px_rgba(0,0,0,0.25)]">Save and Reboot</button>
          </footer>
        </main>
      </div>
      <div className="h-[2px] shrink-0 bg-[#7a7a78]" />
      <div className="absolute top-[2px] left-0 h-[1426px] w-[2px] bg-white/20" />

      <div className={frame + " top-[860px] left-[6px] h-[64px] w-[298px]"} />
      <div className={frame + " top-[316px] left-[457px] h-[61px] w-[145px]"} />
      <div className={frame + " top-[382px] left-[457px] h-[66px] w-[245px]"} />
      <div className={frame + " top-[512px] left-[451px] h-[73px] w-[194px]"} />
      <div className={frame + " top-[1331px] left-[2718px] z-20 h-[91px] w-[283px]"} />
      <Marker n="10" cx={352} cy={849} kind="down" />
      <Marker n="11" cx={664} cy={290} kind="down" />
      <Marker n="12" cx={756} cy={462} kind="up" />
      <Marker n="13" cx={703} cy={599} kind="up" />
      <Marker n="14" cx={2771} cy={1280} kind="right" />
    </div>
  );
}
